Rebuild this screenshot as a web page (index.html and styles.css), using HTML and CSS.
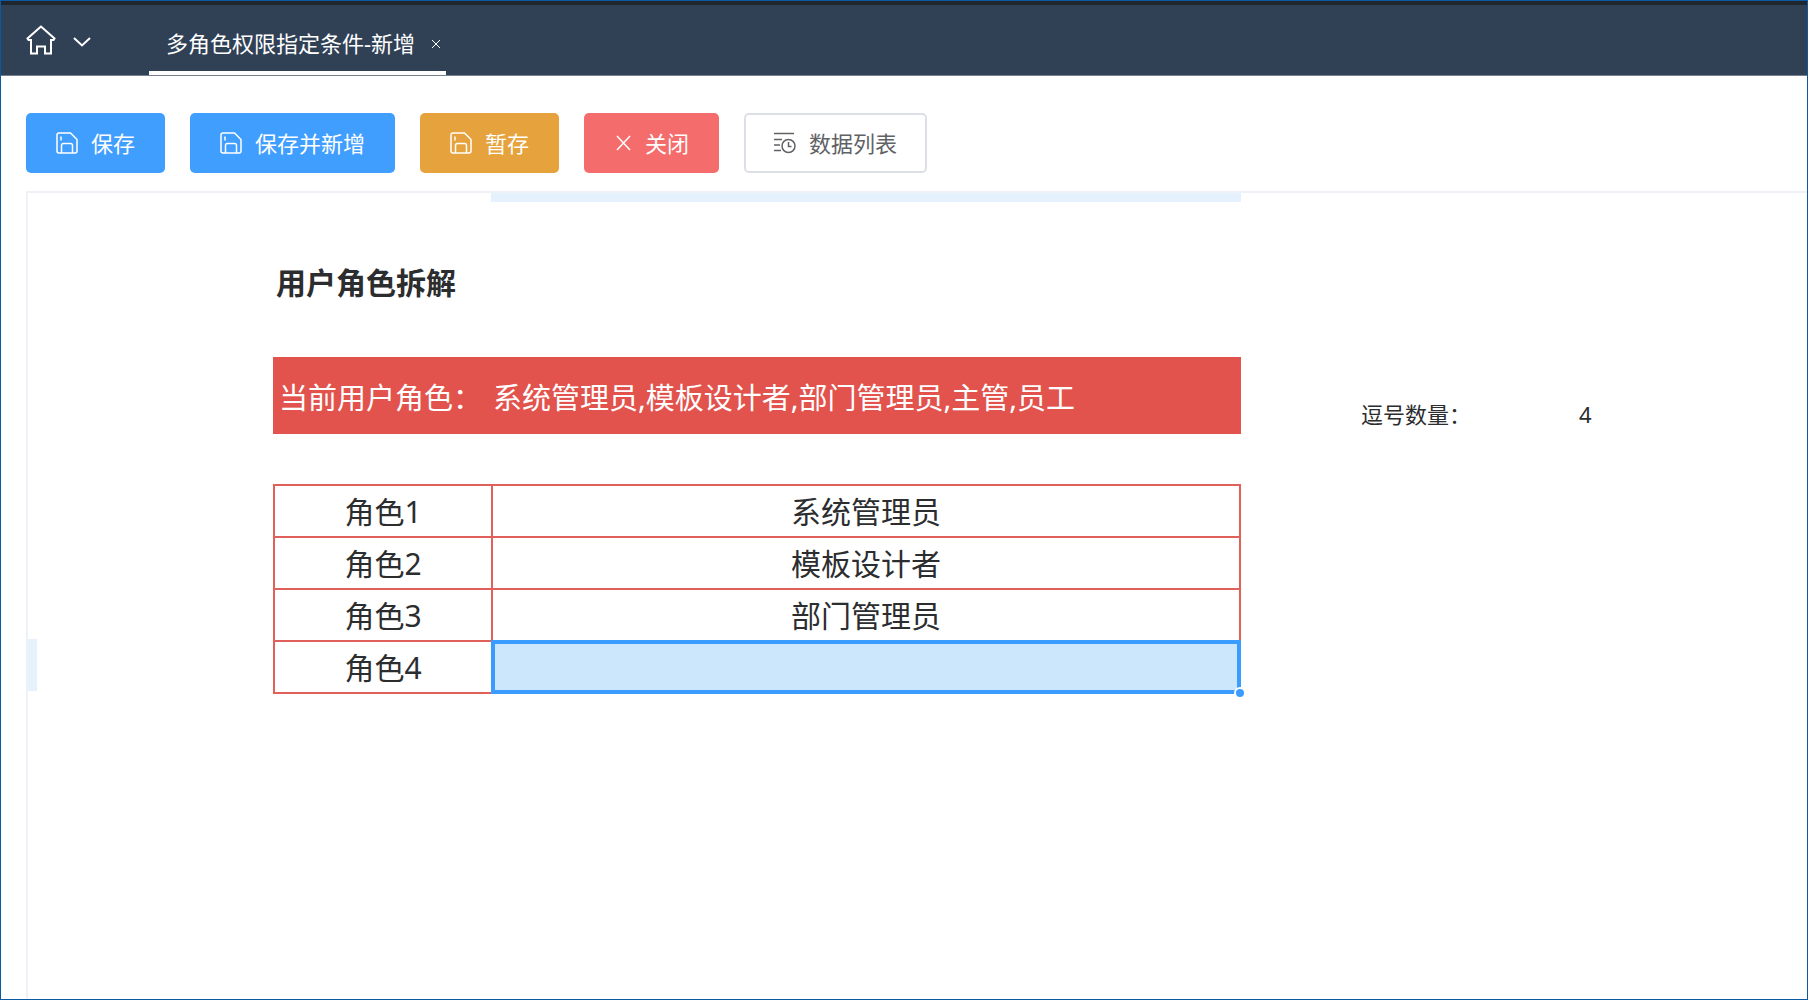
FILE: index.html
```html
<!DOCTYPE html>
<html lang="zh-CN">
<head>
<meta charset="utf-8">
<meta name="viewport" content="width=device-width, initial-scale=1">
<title>多角色权限指定条件-新增</title>
<link rel="stylesheet" href="styles.css">
</head>
<body>
<svg width="0" height="0" class="sprite" aria-hidden="true">
  <symbol id="icon-save" viewBox="0 0 22 22">
    <path d="M3 1H14.5L21 7.5V19A2 2 0 0 1 19 21H3A2 2 0 0 1 1 19V3A2 2 0 0 1 3 1ZM5.500 21V13.500A2 2 0 0 1 7.500 11.500H14.500A2 2 0 0 1 16.500 13.500V21M5 4.500V8.500"/>
  </symbol>
</svg>
<header class="topbar">
  <nav class="topbar-nav">
    <a class="home" href="#" aria-label="首页">
      <svg class="home-icon" viewBox="0 0 30 30" aria-hidden="true"><path d="M15 1.500L1.500 13.500L2.500 15H5V28.500H11V21.500H19V28.500H25V15H27.500L28.500 13.500Z"/></svg>
    </a>
    <button class="plain" type="button" aria-label="展开菜单">
      <svg class="chevron" viewBox="0 0 18 10" aria-hidden="true"><path d="M1 1L9 8.500L17 1"/></svg>
    </button>
  </nav>
  <div class="tab">
    <a class="tab-link" href="#">多角色权限指定条件-新增</a>
    <button class="plain" type="button" aria-label="关闭标签">
      <svg class="tab-close" viewBox="0 0 10 10" aria-hidden="true"><path d="M1 1L9 9M9 1L1 9"/></svg>
    </button>
  </div>
</header>

<div class="toolbar">
  <button class="btn primary" type="button"><svg class="icon" aria-hidden="true"><use href="#icon-save"/></svg>保存</button>
  <button class="btn primary" type="button"><svg class="icon" aria-hidden="true"><use href="#icon-save"/></svg>保存并新增</button>
  <button class="btn warning" type="button"><svg class="icon" aria-hidden="true"><use href="#icon-save"/></svg>暂存</button>
  <button class="btn danger" type="button"><svg class="icon icon-x" viewBox="0 0 18 22" aria-hidden="true"><path d="M3 4L16 18M16 4L3 18"/></svg>关闭</button>
  <button class="btn outline" type="button"><svg class="icon" viewBox="0 0 22 22" aria-hidden="true"><path d="M0 1.500H20M0 7.500H8M0 13H6M0 18.500H7"/><circle cx="14.500" cy="14" r="6.500"/><path d="M14.500 10V14.500H17.500"/></svg>数据列表</button>
</div>

<main class="sheet">
  <div class="column-marker"></div>
  <h1 class="sheet-title">用户角色拆解</h1>
  <div class="banner">
    <span class="banner-label">当前用户角色：</span>
    <span class="banner-value">系统管理员,模板设计者,部门管理员,主管,员工</span>
  </div>
  <div class="count"><span>逗号数量：</span><span>4</span></div>
  <div class="row-marker"></div>
  <table class="roles">
    <tbody>
      <tr><th scope="row">角色1</th><td>系统管理员</td></tr>
      <tr><th scope="row">角色2</th><td>模板设计者</td></tr>
      <tr><th scope="row">角色3</th><td>部门管理员</td></tr>
      <tr><th scope="row">角色4</th><td class="selected"><div class="selection"><i class="handle"></i></div></td></tr>
    </tbody>
  </table>
</main>
</body>
</html>
```

FILE: styles.css
```css
* { box-sizing: border-box; }

body {
  margin: 0;
  min-height: 100vh;
  display: flex;
  flex-direction: column;
  border: 1px solid #0b59a0;
  background: #fff;
  color: #2b2d2f;
  font-family: "Noto Sans", "Noto Sans CJK SC", sans-serif;
  font-size: 22px;
}

svg { display: block; fill: none; stroke: currentColor; }
.sprite { position: absolute; }

button { font: inherit; color: inherit; cursor: pointer; }
a { color: inherit; text-decoration: none; }

.plain { padding: 0; border: 0; background: none; }

.topbar {
  display: flex;
  height: 75px;
  padding-left: 25px;
  border-top: 4px solid #20262e;
  border-bottom: 1px solid #77808f;
  background: #304156;
  color: #fff;
}

.topbar-nav {
  display: flex;
  align-items: center;
  gap: 17px;
  width: 123px;
}
.home-icon { width: 30px; height: 30px; stroke-width: 2; }
.chevron { width: 18px; height: 10px; stroke-width: 2; margin-top: 4px; }

.tab {
  display: flex;
  align-items: center;
  gap: 16px;
  padding: 7px 5px 0 17px;
  border-bottom: 4px solid #fff;
}
.tab-close { width: 10px; height: 10px; margin-top: 4px; }

.toolbar {
  display: flex;
  flex-wrap: wrap;
  gap: 25px;
  padding: 37px 25px 18px;
}

.btn {
  display: flex;
  align-items: center;
  gap: 13px;
  height: 60px;
  padding: 0 29px 3px;
  border: 1px solid transparent;
  border-radius: 5px;
  color: #fff;
  white-space: nowrap;
}
.icon { width: 22px; height: 22px; margin-top: 2px; stroke-width: 1.5; }
.icon-x { width: 18px; }
.primary { background: #409eff; }
.warning { background: #e6a23c; }
.danger { background: #f56c6c; }
.outline {
  padding: 0 28px 3px;
  border: 2px solid #dcdfe6;
  background: #fff;
  color: #606266;
}

.sheet {
  flex: 1;
  display: grid;
  grid-template-columns: 245fr 218fr 750fr 566fr;
  grid-template-rows: 9px auto auto 1fr;
  margin-left: 25px;
  border: 2px solid #eef2f6;
  border-width: 2px 0 0 2px;
  font-size: 30px;
}

.column-marker { grid-area: 1 / 3; background: #e5f1fd; }

.sheet-title {
  grid-area: 2 / 2 / 3 / 4;
  margin: 61px 0 54px;
  padding-left: 3px;
  font-size: 30px;
  line-height: 40px;
}

.banner {
  grid-area: 3 / 2 / 4 / 4;
  display: grid;
  grid-template-columns: 218fr 750fr;
  align-items: center;
  height: 77px;
  background: #e2534d;
  color: #fff;
  font-size: 29px;
  white-space: nowrap;
}
.banner-label { padding-left: 6px; }
.banner-value { padding-left: 2px; }

.count {
  grid-area: 3 / 4;
  align-self: end;
  display: flex;
  gap: 108px;
  padding-left: 120px;
  font-size: 22px;
  line-height: 39px;
}

.roles {
  grid-area: 4 / 2 / 5 / 4;
  align-self: start;
  width: 100%;
  margin-top: 50px;
  border-collapse: collapse;
  table-layout: fixed;
  text-align: center;
}
.roles th,
.roles td {
  height: 52px;
  padding: 2px 0 0;
  border: 2px solid #e2605a;
  font-weight: 400;
  line-height: 40px;
}
.roles th { width: 218px; }

.roles .selected { position: relative; padding: 0; }
.selection {
  position: absolute;
  inset: -2px;
  border: 4px solid #3a9cff;
  background: #cce6fc;
}
.handle {
  position: absolute;
  right: -9px;
  bottom: -9px;
  width: 12px;
  height: 12px;
  border: 2px solid #fff;
  border-radius: 50%;
  background: #3a9cff;
}

.row-marker {
  grid-area: 4 / 1;
  width: 9px;
  height: 52px;
  margin-top: 205px;
  background: #e5f1fd;
}
```
